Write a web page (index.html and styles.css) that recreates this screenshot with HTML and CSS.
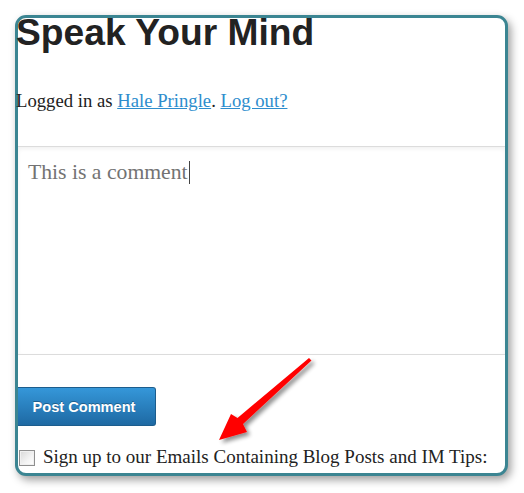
FILE: index.html
```html
<!DOCTYPE html>
<html>
<head>
<meta charset="utf-8">
<link rel="stylesheet" href="styles.css">
</head>
<body>
<div class="frame">
  <h1 class="title">Speak Your Mind</h1>
  <p class="logged">Logged in as <a href="#">Hale Pringle</a>. <a href="#">Log out?</a></p>
  <div class="comment-box">This is a comment<span class="caret"></span></div>
  <button class="submit">Post Comment</button>
  <label class="signup"><span class="check"></span><span>Sign up to our Emails Containing Blog Posts and IM Tips:</span></label>
</div>
<svg class="arrow" width="524" height="493" viewBox="0 0 524 493">
  <defs>
    <filter id="sh" x="-20%" y="-20%" width="140%" height="140%">
      <feGaussianBlur in="SourceAlpha" stdDeviation="2.2"/>
      <feOffset dx="3" dy="3" result="b"/>
      <feComponentTransfer><feFuncA type="linear" slope="0.45"/></feComponentTransfer>
      <feMerge><feMergeNode/><feMergeNode in="SourceGraphic"/></feMerge>
    </filter>
  </defs>
  <polygon filter="url(#sh)" fill="#ff0000" points="309,358 311.5,360.5 243,424 247,432 219,440 231,414 237.5,418"/>
</svg>
</body>
</html>
```
FILE: styles.css
```css
html, body {
  margin: 0;
  padding: 0;
  background: #ffffff;
}
body {
  position: relative;
  width: 524px;
  height: 493px;
  overflow: hidden;
  padding: 15px 0 0 15px;
  box-sizing: border-box;
}
.frame {
  box-sizing: border-box;
  width: 493px;
  border: 3px solid #3b8592;
  border-radius: 11px;
  background: #ffffff;
  box-shadow: 3px 4px 9px rgba(0, 0, 0, 0.38);
  padding-bottom: 4px;
  display: flex;
  flex-direction: column;
  align-items: flex-start;
}
.title {
  margin: 0 0 0 -2px;
  font-family: "Liberation Sans", Arial, sans-serif;
  font-weight: bold;
  font-size: 37.2px;
  line-height: 29px;
  color: #222222;
}
.logged {
  margin: 42px 0 0 -2px;
  font-family: "Liberation Serif", "Times New Roman", serif;
  font-size: 18.7px;
  line-height: 24px;
  color: #222222;
}
.logged a {
  color: #2d8dcd;
  text-decoration: underline;
}
.comment-box {
  box-sizing: border-box;
  align-self: stretch;
  height: 209px;
  margin-top: 33px;
  border-top: 1px solid #dcdcdc;
  border-bottom: 1px solid #dcdcdc;
  box-shadow: inset 0 2px 4px rgba(0, 0, 0, 0.06);
  padding: 12px 0 0 10px;
  font-family: "Liberation Serif", "Times New Roman", serif;
  font-size: 21.7px;
  line-height: 26px;
  color: #737373;
}
.caret {
  display: inline-block;
  width: 1px;
  height: 23px;
  background: #444444;
  vertical-align: -5px;
  margin-left: 1px;
}
.submit {
  margin: 32px 0 0 0;
  box-sizing: border-box;
  width: 138px;
  height: 39px;
  border: 1px solid #1c5d8d;
  border-left: none;
  border-radius: 0 3px 3px 0;
  background: linear-gradient(#3597d9, #1e69a3);
  color: #ffffff;
  font-family: "Liberation Sans", Arial, sans-serif;
  font-weight: bold;
  font-size: 14.6px;
  text-shadow: 0 -1px 0 rgba(0, 0, 0, 0.3);
  padding: 0 5px 0 0;
}
.signup {
  margin-top: 19px;
  display: flex;
  align-items: center;
  gap: 8px;
  font-family: "Liberation Serif", "Times New Roman", serif;
  font-size: 19px;
  line-height: 24px;
  color: #222222;
}
.check {
  box-sizing: border-box;
  width: 16px;
  height: 16px;
  margin-left: 1px;
  border: 1px solid #8f8f8f;
  background: linear-gradient(135deg, #d8d8d8, #f4f4f4 60%, #ffffff);
  box-shadow: inset 0 0 0 1px #f0f0f0;
  position: relative;
  top: 1px;
}
.arrow {
  position: absolute;
  left: 0;
  top: 0;
  pointer-events: none;
}
```
